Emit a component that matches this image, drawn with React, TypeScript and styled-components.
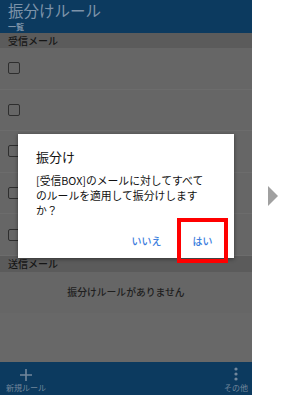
import React from 'react';
import styled, { createGlobalStyle } from 'styled-components';

const GlobalStyle = createGlobalStyle`
  html, body {
    margin: 0;
    padding: 0;
    background: #ffffff;
  }
  body {
    font-family: "Noto Sans CJK JP", "Noto Sans", sans-serif;
  }
`;

const Page = styled.div`
  display: flex;
  width: 288px;
  height: 399px;
  background: #ffffff;
`;

const Phone = styled.div`
  position: relative;
  display: flex;
  flex-direction: column;
  width: 252px;
  height: 395px;
  background: #666666;
`;

const Header = styled.div`
  display: flex;
  flex-direction: column;
  height: 33px;
  padding: 0 8px;
  background: #0c3a5f;
  color: #7d93a9;
  box-sizing: border-box;
`;

const Title = styled.div`
  font-size: 15.5px;
  line-height: 21px;
`;

const SubTitle = styled.div`
  font-size: 8px;
  line-height: 11px;
  font-weight: bold;
`;

const SectionLabel = styled.div<{ h: number }>`
  display: flex;
  align-items: center;
  height: ${p => p.h}px;
  padding-left: 8px;
  background: #5b5b5b;
  color: #161616;
  font-size: 10px;
  font-weight: 500;
`;

const RuleRow = styled.div`
  display: flex;
  align-items: center;
  height: 41.6px;
  padding-left: 8px;
  border-bottom: 1px solid #6c6c6c;
  box-sizing: border-box;
`;

const Check = styled.div`
  width: 12px;
  height: 12px;
  border: 1.5px solid #2e2e2e;
  border-radius: 2px;
  box-sizing: border-box;
`;

const EmptyRow = styled.div`
  display: flex;
  align-items: center;
  justify-content: center;
  height: 41px;
  color: #1e1e1e;
  font-size: 9.8px;
  font-weight: 500;
`;

const Filler = styled.div`
  flex: 1;
  background: #686868;
`;

const BottomBar = styled.div`
  display: flex;
  justify-content: space-between;
  align-items: flex-end;
  height: 33px;
  padding: 0 4px 2px 6px;
  background: #0c3a5f;
  color: #72879c;
  box-sizing: border-box;
`;

const BarItem = styled.div`
  display: flex;
  flex-direction: column;
  align-items: center;
  font-size: 8px;
  line-height: 11px;
`;

const Dialog = styled.div`
  position: absolute;
  left: 18px;
  top: 134px;
  width: 216px;
  height: 124px;
  background: #ffffff;
  box-shadow: 0 1px 4px rgba(0, 0, 0, 0.45);
  padding: 14px 0 0 18px;
  box-sizing: border-box;
  display: flex;
  flex-direction: column;
`;

const DialogTitle = styled.div`
  font-size: 13px;
  line-height: 18px;
  color: #111111;
`;

const DialogBody = styled.div`
  margin-top: 7px;
  font-size: 10.8px;
  line-height: 15px;
  color: #111111;
`;

const Actions = styled.div`
  display: flex;
  justify-content: flex-end;
  align-items: center;
  gap: 5px;
  margin-top: 0;
  padding-right: 6px;
`;

const ActionButton = styled.div<{ highlighted?: boolean }>`
  display: flex;
  align-items: center;
  justify-content: center;
  width: 51px;
  height: 45px;
  box-sizing: border-box;
  color: #3b7ddd;
  font-size: 10px;
  font-weight: 500;
  border: 4px solid ${p => (p.highlighted ? '#ff0000' : 'transparent')};
`;

const Side = styled.div`
  flex: 1;
  display: flex;
  align-items: center;
  justify-content: center;
  padding-bottom: 8px;
`;

const Arrow = styled.div`
  width: 0;
  height: 0;
  border-top: 10px solid transparent;
  border-bottom: 10px solid transparent;
  border-left: 10px solid #a0a0a0;
  margin-left: 6px;
`;

const App: React.FC = () => {
  const rows = [0, 1, 2, 3, 4];
  return (
    <Page>
      <GlobalStyle />
      <Phone>
        <Header>
          <Title>振分けルール</Title>
          <SubTitle>一覧</SubTitle>
        </Header>
        <SectionLabel h={15}>受信メール</SectionLabel>
        {rows.map(r => (
          <RuleRow key={r}>
            <Check />
          </RuleRow>
        ))}
        <SectionLabel h={16}>送信メール</SectionLabel>
        <EmptyRow>振分けルールがありません</EmptyRow>
        <Filler />
        <BottomBar>
          <BarItem>
            <svg width="14" height="14" viewBox="0 0 14 14">
              <path d="M7 1v12M1 7h12" stroke="#72879c" strokeWidth="1.6" fill="none" />
            </svg>
            新規ルール
          </BarItem>
          <BarItem>
            <svg width="6" height="16" viewBox="0 0 6 16">
              <circle cx="3" cy="3" r="1.6" fill="#72879c" />
              <circle cx="3" cy="8" r="1.6" fill="#72879c" />
              <circle cx="3" cy="13" r="1.6" fill="#72879c" />
            </svg>
            その他
          </BarItem>
        </BottomBar>

        <Dialog>
          <DialogTitle>振分け</DialogTitle>
          <DialogBody>
            [受信BOX]のメールに対してすべて
            <br />
            のルールを適用して振分けします
            <br />
            か？
          </DialogBody>
          <Actions>
            <ActionButton>いいえ</ActionButton>
            <ActionButton highlighted>はい</ActionButton>
          </Actions>
        </Dialog>
      </Phone>
      <Side>
        <Arrow />
      </Side>
    </Page>
  );
};

export default App;
